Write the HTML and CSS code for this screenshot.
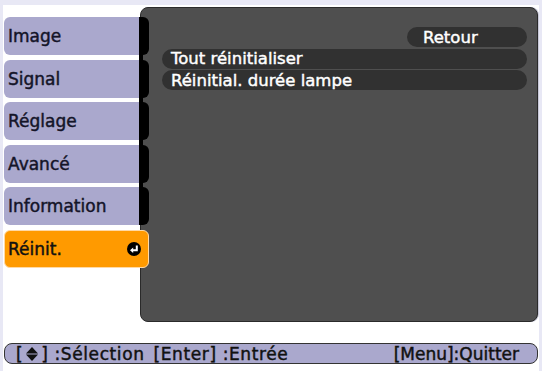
FILE: index.html
```html
<!DOCTYPE html>
<html>
<head>
<meta charset="utf-8">
<link rel="stylesheet" href="styles.css">
</head>
<body>
<div class="screen">
  <div class="main">
    <div class="menu">
      <div class="group">
        <div class="item"><span class="label">Image</span><span class="tab"></span></div>
        <div class="item"><span class="label">Signal</span><span class="tab"></span></div>
        <div class="item"><span class="label">Réglage</span><span class="tab"></span></div>
        <div class="item"><span class="label">Avancé</span><span class="tab"></span></div>
        <div class="item"><span class="label">Information</span><span class="tab"></span></div>
      </div>
      <div class="item active">
        <span class="label">Réinit.</span>
        <svg class="enter" width="14" height="14" viewBox="0 0 14 14">
          <circle cx="7" cy="7" r="7" fill="#000"/>
          <path d="M9.8 3.4 V8.2 H5.6" fill="none" stroke="#fff" stroke-width="2"/>
          <polygon points="3,8.2 6.2,5.4 6.2,11" fill="#fff"/>
        </svg>
      </div>
    </div>
    <div class="panel">
      <div class="row back"><span>Retour</span></div>
      <div class="row"><span>Tout réinitialiser</span></div>
      <div class="row"><span>Réinitial. durée lampe</span></div>
    </div>
  </div>
  <div class="footer">
    <div class="hints left">
      <span class="key">[<svg class="updown" width="12" height="14" viewBox="0 0 12 14"><polygon points="6,0 12,6.5 0,6.5" fill="#111"/><polygon points="0,7.5 12,7.5 6,14" fill="#111"/></svg>]</span><span class="desc">:Sélection</span>
      <span class="key gap">[Enter]</span><span class="desc">:Entrée</span>
    </div>
    <div class="hints"><span>[Menu]:Quitter</span></div>
  </div>
</div>
</body>
</html>
```
FILE: styles.css
```css
html, body {
  margin: 0;
  padding: 0;
}
body {
  width: 542px;
  height: 371px;
  background: #e8e8f5;
  overflow: hidden;
  font-family: "DejaVu Sans", sans-serif;
  font-weight: normal;
  -webkit-text-stroke: 0.45px currentColor;
}
.screen {
  margin: 5px 3px 0 3px;
  height: 366px;
  background: #ffffff;
  padding: 2px 1px 0 1px;
  box-sizing: border-box;
  display: flex;
  flex-direction: column;
}
.main {
  display: flex;
  height: 315px;
}
.menu {
  width: 145px;
  margin-right: -9px;
  padding-top: 10px;
  position: relative;
  z-index: 1;
  display: flex;
  flex-direction: column;
}
.group {
  display: flex;
  flex-direction: column;
  gap: 4.5px;
  margin-bottom: 4.5px;
  background: linear-gradient(to right, transparent 135px, #000 135px, #000 139px, transparent 139px);
}
.item {
  height: 38px;
  display: flex;
  align-items: stretch;
  font-size: 17px;
  color: #141428;
}
.label {
  flex: 1;
  background: #aaa8cd;
  border-radius: 6px 0 0 6px;
  display: flex;
  align-items: center;
  padding-left: 4px;
}
.tab {
  width: 10px;
  background: #000;
  border-radius: 0 6px 6px 0;
}
.item.active {
  background: #ff9a00;
  border: 1px solid #ffd9a6;
  border-radius: 6px;
  box-sizing: border-box;
  align-items: center;
  padding-right: 7px;
  color: #111;
}
.item.active .label {
  background: transparent;
  padding-left: 3px;
  align-self: stretch;
}
.enter {
  display: block;
}
.panel {
  flex: 1;
  background: #4f4f4f;
  border: 1px solid #2a2a2a;
  border-radius: 8px;
  box-shadow: 1px 0 0 #c8c8d8;
  padding: 19px 10px 0 21px;
  display: flex;
  flex-direction: column;
  gap: 1.5px;
}
.row {
  height: 20px;
  background: #313131;
  border-radius: 10px;
  color: #fff;
  font-size: 16.5px;
  display: flex;
  align-items: center;
  padding-left: 9px;
  white-space: nowrap;
}
.row.back {
  width: 120px;
  margin-left: auto;
  padding-left: 16px;
  box-sizing: border-box;
}
.footer {
  margin-top: 21px;
  height: 21px;
  background: #aaa8cd;
  border: 1px solid #333;
  border-radius: 8px;
  box-sizing: border-box;
  display: flex;
  justify-content: space-between;
  align-items: center;
  padding: 0 18px 0 11px;
  font-size: 17px;
  color: #111;
  white-space: nowrap;
}
.hints {
  display: flex;
  align-items: center;
}
.hints.left {
  letter-spacing: 0.6px;
}
.key {
  display: inline-flex;
  align-items: center;
}
.updown {
  margin: 0 3px 0 3px;
}
.desc {
  margin-left: 6px;
}
.gap {
  margin-left: 9px;
}
```
